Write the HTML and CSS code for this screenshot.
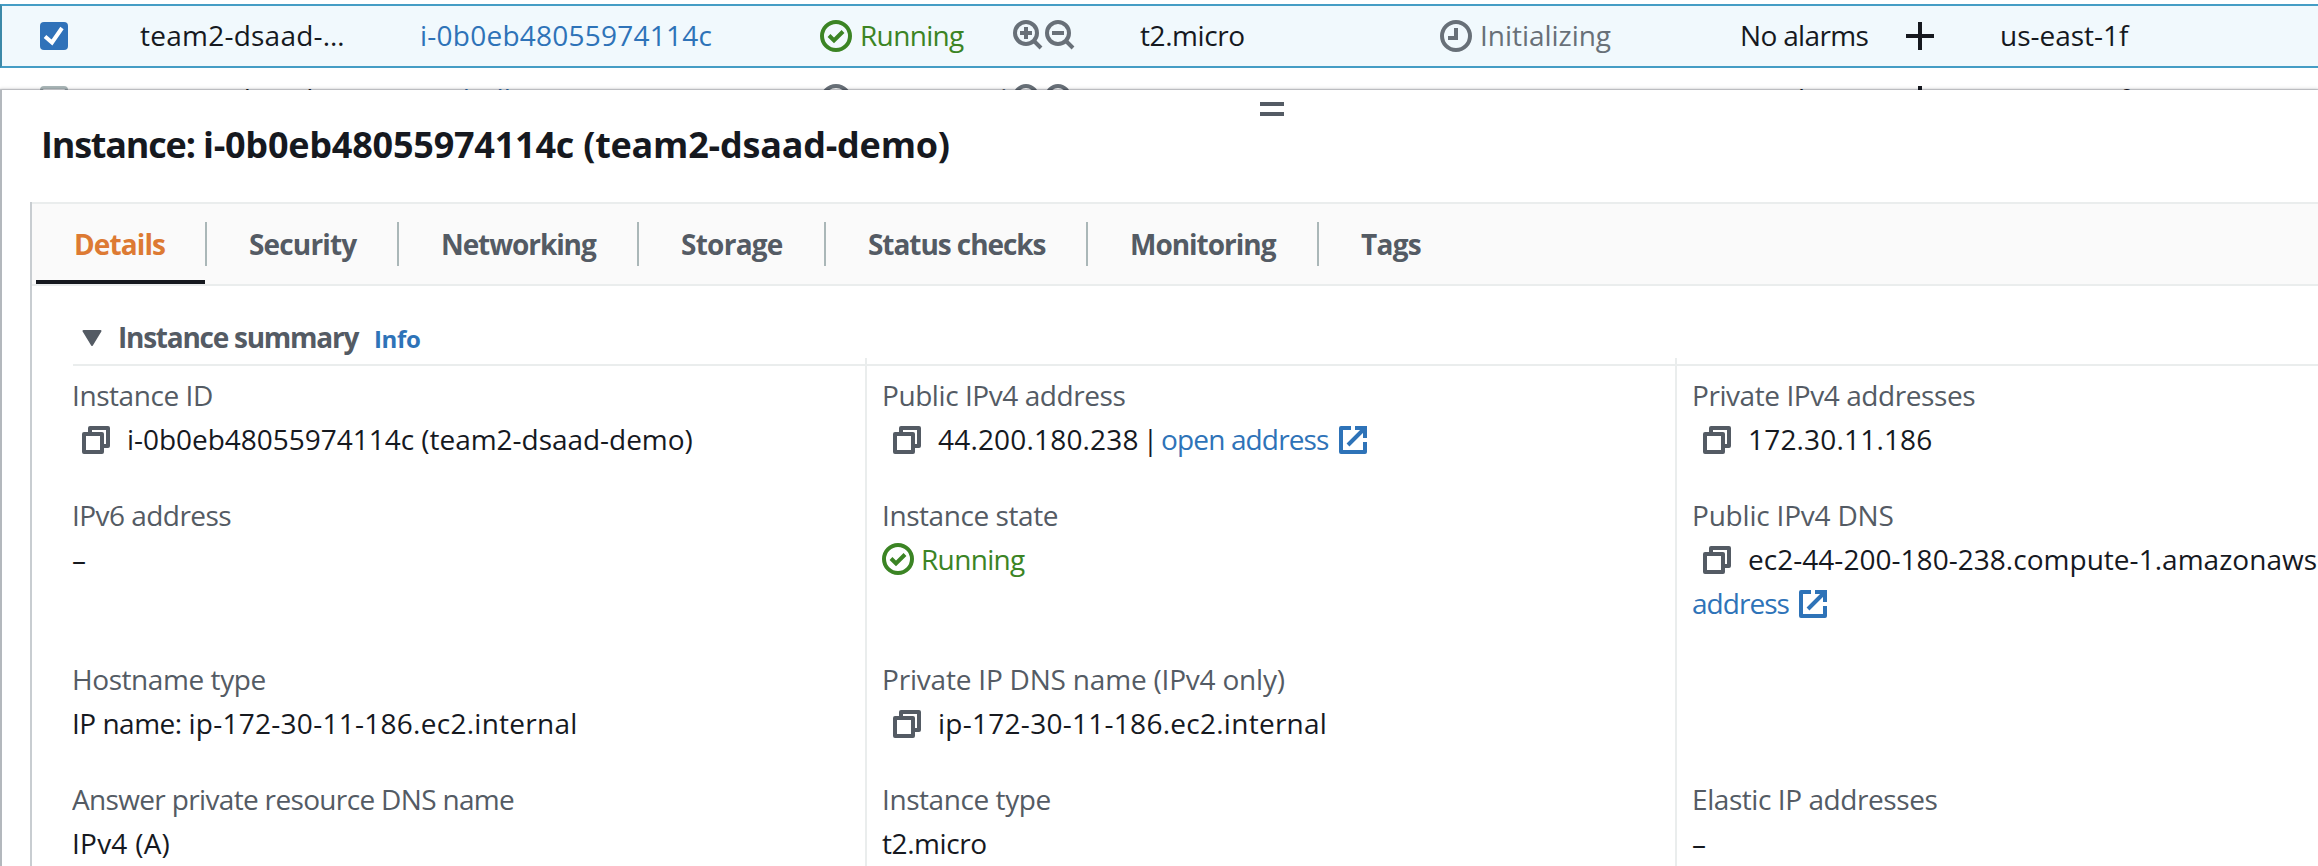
FILE: index.html
```html
<!DOCTYPE html>
<html lang="en">
<head>
<meta charset="utf-8">
<title>Instances</title>
<link rel="stylesheet" href="styles.css">
</head>
<body>
<svg width="0" height="0" class="sprite">
  <symbol id="ok" viewBox="0 0 32 32"><circle cx="16" cy="16" r="14" fill="none" stroke="currentColor" stroke-width="4"/><path d="M9 15.500l5 5 9-9" fill="none" stroke="currentColor" stroke-width="4"/></symbol>
  <symbol id="pending" viewBox="0 0 32 32"><circle cx="16" cy="16" r="14" fill="none" stroke="currentColor" stroke-width="4"/><path d="M16 8v10H8" fill="none" stroke="currentColor" stroke-width="4"/></symbol>
  <symbol id="stopped" viewBox="0 0 32 32"><circle cx="16" cy="16" r="14" fill="none" stroke="currentColor" stroke-width="4"/><path d="M9 16h14" fill="none" stroke="currentColor" stroke-width="4"/></symbol>
  <symbol id="zin" viewBox="0 0 30 30"><circle cx="13" cy="13" r="11" fill="none" stroke="currentColor" stroke-width="4"/><path d="M20.500 20.500l7.500 7.500M13 7v12M7 13h12" fill="none" stroke="currentColor" stroke-width="4"/></symbol>
  <symbol id="zout" viewBox="0 0 30 30"><circle cx="13" cy="13" r="11" fill="none" stroke="currentColor" stroke-width="4"/><path d="M20.500 20.500l7.500 7.500M7 13h12" fill="none" stroke="currentColor" stroke-width="4"/></symbol>
  <symbol id="plus" viewBox="0 0 28 28"><path d="M14 0v28M0 14h28" fill="none" stroke="currentColor" stroke-width="4"/></symbol>
  <symbol id="copy" viewBox="0 0 28 28"><path d="M8 8V2h18v18h-5M2 8h18v18H2z" fill="none" stroke="currentColor" stroke-width="4" stroke-linejoin="round"/></symbol>
  <symbol id="ext" viewBox="0 0 28 28"><path d="M12 2H2v24h24V16" fill="none" stroke="currentColor" stroke-width="4" stroke-linejoin="round"/><path d="M9 19L25 3M16 2h10v10" fill="none" stroke="currentColor" stroke-width="4"/></symbol>
</svg>

<div class="table">
  <div class="row selected">
    <span class="check on"><svg class="i28" viewBox="0 0 28 28"><path d="M5 14.500l7 6L22 6" fill="none" stroke="#fff" stroke-width="4"/></svg></span>
    <span class="p3">team2-dsaad-…</span>
    <a class="link p3">i-0b0eb48055974114c</a>
    <span class="status ok"><svg class="i32"><use href="#ok"/></svg><span class="n6">Running</span></span>
    <span class="zoom"><svg class="i30"><use href="#zin"/></svg><svg class="i30"><use href="#zout"/></svg></span>
    <span class="n4">t2.micro</span>
    <span class="status mute"><svg class="i32"><use href="#pending"/></svg><span>Initializing</span></span>
    <span class="n6">No alarms</span>
    <svg class="i28"><use href="#plus"/></svg>
    <span>us-east-1f</span>
  </div>
  <div class="row">
    <span class="check"></span>
    <span class="p3">team2-dsaad-…</span>
    <a class="link p3">i-0d7db17051744117c</a>
    <span class="status mute"><svg class="i32"><use href="#stopped"/></svg><span class="n4">Terminated</span></span>
    <span class="zoom"><svg class="i30"><use href="#zin"/></svg><svg class="i30"><use href="#zout"/></svg></span>
    <span class="n4">t2.micro</span>
    <span></span>
    <span class="n6">No alarms</span>
    <svg class="i28"><use href="#plus"/></svg>
    <span>us-east-1f</span>
  </div>
</div>

<section class="panel">
  <div class="handle"></div>
  <h1 class="title"><span class="title-kind">Instance: </span>i-0b0eb48055974114c (team2-dsaad-demo)</h1>
  <div class="card">
    <nav class="tabs">
      <a class="tab details">Details</a>
      <a class="tab security">Security</a>
      <a class="tab networking">Networking</a>
      <a class="tab storage">Storage</a>
      <a class="tab checks">Status checks</a>
      <a class="tab monitoring">Monitoring</a>
      <a class="tab tags">Tags</a>
    </nav>
    <div class="summary">
      <svg class="caret" viewBox="0 0 20 16"><path d="M1.500 1h17L10 15z" fill="currentColor" stroke="currentColor" stroke-width="2" stroke-linejoin="round"/></svg>
      <h2 class="summary-title">Instance summary</h2>
      <a class="info">Info</a>
    </div>
    <div class="grid">
      <div class="cell first">
        <div class="label n4">Instance ID</div>
        <div class="value"><svg class="copy"><use href="#copy"/></svg>i-0b0eb48055974114c (team2-dsaad-demo)</div>
      </div>
      <div class="cell first">
        <div class="label n4">Public IPv4 address</div>
        <div class="value"><svg class="copy"><use href="#copy"/></svg><span class="p2">44.200.180.238</span><span class="pipe">|</span><a class="link n8">open address</a><svg class="ext"><use href="#ext"/></svg></div>
      </div>
      <div class="cell first">
        <div class="label n4">Private IPv4 addresses</div>
        <div class="value"><svg class="copy"><use href="#copy"/></svg><span class="p2">172.30.11.186</span></div>
      </div>

      <div class="cell">
        <div class="label n5">IPv6 address</div>
        <div class="value">–</div>
      </div>
      <div class="cell">
        <div class="label n4">Instance state</div>
        <div class="value status ok"><svg class="i32"><use href="#ok"/></svg><span class="n6">Running</span></div>
      </div>
      <div class="cell">
        <div class="label n1">Public IPv4 DNS</div>
        <div class="value"><svg class="copy"><use href="#copy"/></svg><span class="dns">ec2-44-200-180-238.compute-1.amazonaws.com</span><span class="pipe">|</span><a class="link n8">open</a></div>
        <div class="value"><a class="link n9">address</a><svg class="ext"><use href="#ext"/></svg></div>
      </div>

      <div class="cell">
        <div class="label n4">Hostname type</div>
        <div class="value"><span class="kind">IP name: </span><span class="p4">ip-172-30-11-186.ec2.internal</span></div>
      </div>
      <div class="cell">
        <div class="label n1">Private IP DNS name (IPv4 only)</div>
        <div class="value"><svg class="copy"><use href="#copy"/></svg><span class="p4">ip-172-30-11-186.ec2.internal</span></div>
      </div>
      <div class="cell"></div>

      <div class="cell">
        <div class="label n6">Answer private resource DNS name</div>
        <div class="value p3">IPv4 (A)</div>
      </div>
      <div class="cell">
        <div class="label n4">Instance type</div>
        <div class="value n4">t2.micro</div>
      </div>
      <div class="cell">
        <div class="label n4">Elastic IP addresses</div>
        <div class="value">–</div>
      </div>
    </div>
  </div>
</section>
</body>
</html>
```
FILE: styles.css
```css
* { box-sizing: border-box; }
body {
  margin: 0;
  height: 866px;
  overflow: hidden;
  background: #fff;
  color: #16191f;
  font: 460 28px/44px "Open Sans", "Noto Sans", sans-serif;
  letter-spacing: -0.03px;
  white-space: nowrap;
}
h1, h2 { margin: 0; font-weight: 700; }
svg { display: block; flex: none; }
.sprite { position: absolute; }

/* letter spacing steps */
.n9 { letter-spacing: -0.97px; }
.n8 { letter-spacing: -0.86px; }
.n6 { letter-spacing: -0.66px; }
.n5 { letter-spacing: -0.54px; }
.n4 { letter-spacing: -0.43px; }
.n1 { letter-spacing: -0.2px; }
.p2 { letter-spacing: 0.18px; }
.p3 { letter-spacing: 0.24px; }
.p4 { letter-spacing: 0.27px; }

.link { color: #2e73b8; }
.i28 { width: 28px; height: 28px; }
.i30 { width: 30px; height: 30px; }
.i32 { width: 32px; height: 32px; }

/* instances table */
.table {
  height: 90px;
  padding-top: 4px;
  overflow: hidden;
}
.row {
  display: grid;
  grid-template-columns: 100px 280px 400px 193px 127px 300px 300px 166px 94px 1fr;
  align-items: center;
  height: 64px;
  padding: 0 0 2px 38px;
  border: 2px solid transparent;
  border-right: 0;
}
.row.selected {
  background: #f1f9fd;
  border-color: #459dc5;
  border-left-color: #3c89a8;
}
.row > svg, .check, .row .status svg { margin-top: 2px; }
.check {
  width: 28px;
  height: 28px;
  border: 3px solid #aab7b8;
  border-radius: 4px;
}
.check.on { border: 0; background: #3072b9; }
.status { display: flex; align-items: center; gap: 8px; }
.status.ok { color: #3b8424; }
.status.mute { color: #687078; }
.zoom { display: flex; gap: 2px; color: #687078; }

/* split panel */
.panel {
  position: relative;
  height: 776px;
  border-left: 2px solid #b3b8bd;
  background: #fff;
  box-shadow: 0 -1px 1px rgba(0, 7, 22, 0.2), 0 -2px 3px rgba(0, 7, 22, 0.1);
}
.handle {
  width: 24px;
  height: 26px;
  margin-left: 1258px;
  padding-top: 12px;
  background: linear-gradient(#545b64 4px, #fff 4px, #fff 10px, #545b64 10px) content-box;
}
.title {
  margin: 7px 0 35px 39px;
  font-size: 36px;
  line-height: 44px;
  letter-spacing: -0.23px;
}
.title-kind { letter-spacing: -1.2px; }
.card { margin-left: 28px; border-left: 2px solid #c8cdd1; height: 664px; }
.tabs {
  display: flex;
  align-items: stretch;
  height: 84px;
  padding-left: 4px;
  border-top: 2px solid #eaeded;
  border-bottom: 2px solid #eaeded;
  background: #fafafa;
}
.tab {
  position: relative;
  padding: 18px 0 0 42px;
  color: #545b64;
  font-weight: 700;
}
.tab::after {
  content: "";
  position: absolute;
  right: 0;
  top: 18px;
  width: 2px;
  height: 44px;
  background: #aab7b8;
}
.details {
  width: 171px;
  padding-left: 38px;
  color: #dd7a33;
  letter-spacing: -0.9px;
}
.details::before {
  content: "";
  position: absolute;
  left: 0;
  right: 2px;
  bottom: 0;
  height: 4px;
  background: #16191f;
}
.security { width: 192px; letter-spacing: -0.83px; }
.networking { width: 240px; letter-spacing: -1.1px; }
.storage { width: 187px; letter-spacing: -0.75px; }
.checks { width: 262px; letter-spacing: -1.06px; }
.monitoring { width: 231px; letter-spacing: -1.02px; }
.tags { letter-spacing: -0.75px; }
.tags::after { display: none; }

.summary {
  display: flex;
  height: 80px;
  margin-left: 41px;
  padding-top: 29px;
  border-bottom: 2px solid #eaeded;
}
.caret { width: 20px; height: 16px; margin: 15px 16px 0 9px; color: #545b64; }
.summary-title { width: 256px; font-size: 28px; color: #545b64; letter-spacing: -1.25px; }
.info { padding-top: 2px; font-size: 24px; font-weight: 700; color: #2e73b8; letter-spacing: -0.34px; }

.grid {
  display: grid;
  grid-template-columns: 793px 810px 1fr;
  margin: -8px 0 0 40px;
  overflow: hidden;
}
.cell { min-width: 0; padding: 0 0 32px 15px; border-left: 2px solid #eaeded; }
.cell.first { padding-top: 15px; }
.cell:nth-child(3n+1) { padding-left: 0; border-left: 0; }
.label { color: #545b64; }
.value { display: flex; height: 44px; align-items: center; }
.copy { width: 28px; height: 28px; margin: 2px 17px 0 11px; color: #545b64; }
.cell:nth-child(3n+1) .copy { margin-left: 10px; }
.kind { white-space: pre; letter-spacing: -0.5px; }
.dns { letter-spacing: 0.03px; }
.pipe { margin: 0 3px 0 4px; }
.ext { width: 28px; height: 28px; margin: 2px 0 0 10px; color: #2e73b8; }
.value.status { gap: 7px; }
```
